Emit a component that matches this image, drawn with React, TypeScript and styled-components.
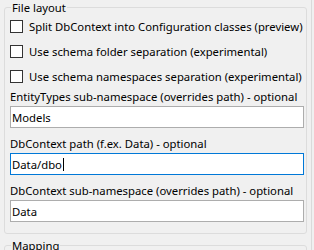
import styled, { createGlobalStyle } from 'styled-components';

const GlobalStyle = createGlobalStyle`
  html, body {
    margin: 0;
    padding: 0;
    background: #f0f0f0;
  }
  body {
    font-family: "Noto Sans", "Liberation Sans", sans-serif;
    font-size: 11.3px;
    color: #000;
  }
`;

const Frame = styled.div`
  width: 307px;
  height: 250px;
  padding-left: 4px;
  border-right: 1px solid #dadada;
  overflow: hidden;
  background: #f0f0f0;
`;

const Group = styled.section<{ $top: number; $height?: number }>`
  position: relative;
  box-sizing: border-box;
  width: 303px;
  height: ${(p) => (p.$height ? `${p.$height}px` : 'auto')};
  margin-top: ${(p) => p.$top}px;
  padding: 0 5px 11px 5px;
  border: 1px solid #dcdcdc;
  border-radius: 3px;
`;

const Legend = styled.span`
  position: absolute;
  top: -8px;
  left: 6px;
  padding: 0 1px;
  line-height: 15px;
  background: #f0f0f0;
`;

const CheckList = styled.div`
  display: flex;
  flex-direction: column;
  gap: 12px;
  padding-top: 12px;
`;

const CheckRow = styled.label`
  display: flex;
  align-items: center;
  gap: 6px;
  height: 13px;
  white-space: nowrap;
`;

const Box = styled.span`
  box-sizing: border-box;
  width: 13px;
  height: 13px;
  flex: none;
  border: 1px solid #333;
  background: #fff;
`;

const Field = styled.div`
  display: flex;
  flex-direction: column;
  margin-top: 7px;
  & + & {
    margin-top: 9px;
  }
`;

const FieldLabel = styled.div`
  height: 14px;
  line-height: 14px;
  margin-bottom: 2px;
  white-space: nowrap;
`;

const TextBox = styled.div<{ $focused?: boolean }>`
  box-sizing: border-box;
  display: flex;
  align-items: center;
  width: 294px;
  height: 22px;
  padding-left: 1px;
  border: 1px solid ${(p) => (p.$focused ? '#0078d7' : '#adadad')};
  background: #fff;
  white-space: nowrap;
`;

const Caret = styled.span`
  width: 1px;
  height: 13px;
  margin-left: 1px;
  background: #000;
`;

const checks = [
  'Split DbContext into Configuration classes (preview)',
  'Use schema folder separation (experimental)',
  'Use schema namespaces separation (experimental)',
];

const fields = [
  { label: 'EntityTypes sub-namespace (overrides path) - optional', value: 'Models' },
  { label: 'DbContext path (f.ex. Data) - optional', value: 'Data/dbo', focused: true },
  { label: 'DbContext sub-namespace (overrides path) - optional', value: 'Data' },
];

export default function App() {
  return (
    <>
      <GlobalStyle />
      <Frame>
        <Group $top={7}>
          <Legend>File layout</Legend>
          <CheckList>
            {checks.map((c) => (
              <CheckRow key={c}>
                <Box />
                {c}
              </CheckRow>
            ))}
          </CheckList>
          {fields.map((f) => (
            <Field key={f.label}>
              <FieldLabel>{f.label}</FieldLabel>
              <TextBox $focused={f.focused}>
                {f.value}
                {f.focused && <Caret />}
              </TextBox>
            </Field>
          ))}
        </Group>
        <Group $top={11} $height={100}>
          <Legend>Mapping</Legend>
        </Group>
      </Frame>
    </>
  );
}
